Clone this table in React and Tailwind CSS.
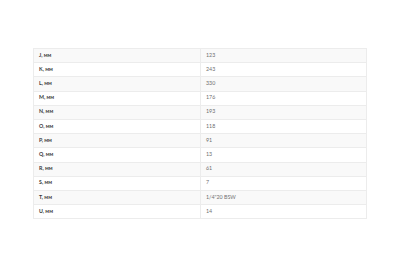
import React from 'react';

const rows = [
  ['J, мм', '123'],
  ['K, мм', '243'],
  ['L, мм', '330'],
  ['M, мм', '176'],
  ['N, мм', '193'],
  ['O, мм', '118'],
  ['P, мм', '91'],
  ['Q, мм', '13'],
  ['R, мм', '61'],
  ['S, мм', '7'],
  ['T, мм', '1/4"20 BSW'],
  ['U, мм', '14'],
];

export default function App() {
  return (
    <div className="w-[400px] h-[267px] bg-white pt-[48px] pl-[33px]" style={{ fontFamily: 'Lato, "Open Sans", sans-serif' }}>
      <table className="w-[334px] border-collapse border border-[#ececec] text-[5.3px]">
        <tbody>
          {rows.map(([k, v], i) => (
            <tr key={k} className={`h-[14.2px] ${i % 2 === 0 ? 'bg-[#f9f9f9]' : 'bg-white'}`}>
              <td className="w-[167px] border border-[#ececec] pl-[5px] font-bold text-[#3a3a3a]">{k}</td>
              <td className="border border-[#ececec] pl-[5px] text-[#6f6f6f]">{v}</td>
            </tr>
          ))}
        </tbody>
      </table>
    </div>
  );
}
